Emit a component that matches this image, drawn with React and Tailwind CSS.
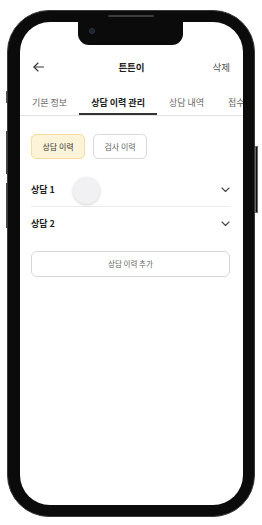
import React, { useState } from 'react';

const tabs = ['기본 정보', '상담 이력 관리', '상담 내역', '접수 내역'];

function BackArrow() {
    return (
        <svg width="11" height="10" viewBox="0 0 11 10" fill="none" stroke="#333" strokeWidth="1.1" strokeLinecap="round" strokeLinejoin="round">
            <path d="M10.5 5H1" />
            <path d="M5 1L1 5l4 4" />
        </svg>
    );
}

function Chevron() {
    return (
        <svg width="9" height="6" viewBox="0 0 9 6" fill="none" stroke="#444" strokeWidth="1.1" strokeLinecap="round" strokeLinejoin="round">
            <path d="M1 1l3.5 3.5L8 1" />
        </svg>
    );
}

export default function App() {
    const [activeTab, setActiveTab] = useState(1);
    const [filter, setFilter] = useState('상담');

    return (
        <div className="w-[262px] h-[525px] bg-white pt-[10px] pl-[7px]" style={{ fontFamily: '"Noto Sans CJK KR", "Noto Sans", sans-serif' }}>
            <div className="relative w-[248px] h-[507px] rounded-[42px] bg-[#0b0b0b] border border-[#3a3a3a] pt-[11px] pb-[11px] pl-[12px] pr-[11px]">
                {/* side buttons */}
                <div className="absolute left-[-2px] top-[80px] w-[1px] h-[12px] bg-[#555]" />
                <div className="absolute left-[-2px] top-[120px] w-[1px] h-[43px] bg-[#444]" />
                <div className="absolute left-[-2px] top-[172px] w-[1px] h-[45px] bg-[#444]" />
                <div className="absolute right-[-4px] top-[135px] w-[3px] h-[67px] border border-[#666] bg-[#111]" />
                {/* speaker */}
                <div className="absolute left-[100px] top-[4px] w-[46px] h-[2px] rounded-full bg-[#3c3c3c]" />

                <div className="relative h-full rounded-[30px] bg-white overflow-hidden">
                    {/* notch */}
                    <div className="absolute left-[58px] top-0 w-[105px] h-[23px] bg-[#0b0b0b] rounded-b-[11px]">
                        <div className="absolute left-[11px] top-[6px] w-[6px] h-[6px] rounded-full bg-[#1c2230] border border-[#2c3446]" />
                    </div>

                    <div className="h-[33px]" />
                    <div className="flex items-center justify-between h-[24px] px-[13px]">
                        <button className="w-[20px] flex items-center"><BackArrow /></button>
                        <div className="text-[9.5px] font-bold text-[#222]">튼튼이</div>
                        <button className="w-[20px] text-[9.5px] text-[#555] text-right">삭제</button>
                    </div>

                    <div className="mt-[12px] flex border-b border-[#e3e3e3] whitespace-nowrap overflow-hidden">
                        {tabs.map((t, i) => (
                            <button
                                key={t}
                                onClick={() => setActiveTab(i)}
                                className={
                                    i === activeTab
                                        ? 'shrink-0 h-[24px] px-3 pt-[2px] text-[9px] font-bold text-[#222] border-b-2 border-[#333]'
                                        : 'shrink-0 h-[24px] px-3 pt-[2px] text-[9px] text-[#666] border-b-2 border-transparent'
                                }
                            >
                                {t}
                            </button>
                        ))}
                    </div>

                    <div className="px-[11px] pr-[13px]">
                        <div className="mt-[18px] flex gap-[8px]">
                            <button
                                onClick={() => setFilter('상담')}
                                className={
                                    filter === '상담'
                                        ? 'w-[54px] h-[25px] rounded-[5px] border border-[#f3dd9e] bg-[#fdf3d8] text-[8px] text-[#333]'
                                        : 'w-[54px] h-[25px] rounded-[5px] border border-[#d9d9d9] bg-white text-[8px] text-[#666]'
                                }
                            >
                                상담 이력
                            </button>
                            <button
                                onClick={() => setFilter('검사')}
                                className={
                                    filter === '검사'
                                        ? 'w-[54px] h-[25px] rounded-[5px] border border-[#f3dd9e] bg-[#fdf3d8] text-[8px] text-[#333]'
                                        : 'w-[54px] h-[25px] rounded-[5px] border border-[#d9d9d9] bg-white text-[8px] text-[#666]'
                                }
                            >
                                검사 이력
                            </button>
                        </div>

                        <div className="mt-[14px]">
                            <div className="relative flex items-center justify-between h-[34px] border-b border-[#ececec]">
                                <span className="text-[9px] font-bold text-[#222]">상담 1</span>
                                <Chevron />
                                <div className="absolute left-[42px] top-[4px] w-[27px] h-[27px] rounded-full bg-[#f1f1f3] shadow-[0_1px_3px_rgba(0,0,0,0.18)]" />
                            </div>
                            <div className="flex items-center justify-between h-[34px]">
                                <span className="text-[9px] font-bold text-[#222]">상담 2</span>
                                <Chevron />
                            </div>
                        </div>

                        <button className="mt-[10px] w-full h-[26px] rounded-[6px] border border-[#d6d6d6] text-[7.5px] text-[#666]">
                            상담 이력 추가
                        </button>
                    </div>
                </div>
            </div>
        </div>
    );
}
